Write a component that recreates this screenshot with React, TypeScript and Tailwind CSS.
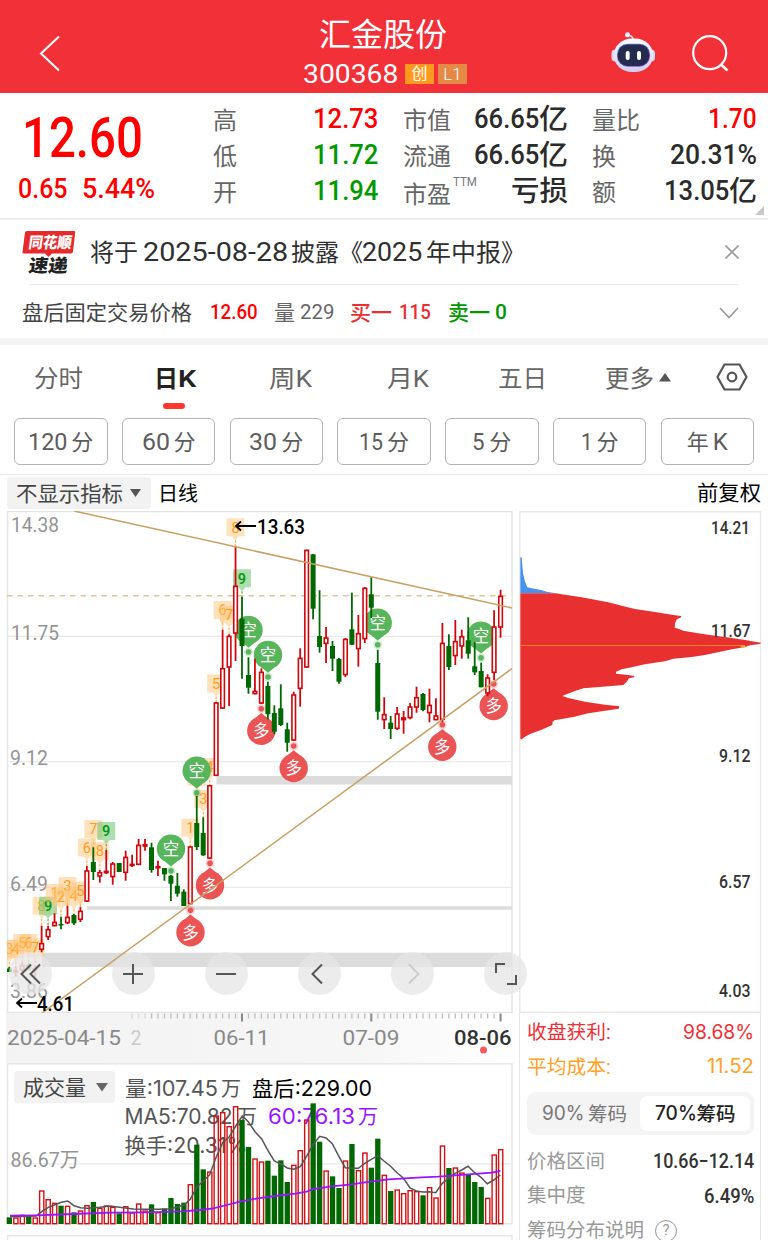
import { useLayoutEffect, useRef, type ReactNode } from "react";

/** Condenses or stretches one line of text to the width of its box. */
function Fit({ className = "", children }: { className?: string; children: ReactNode }) {
  const box = useRef<HTMLSpanElement>(null);
  const line = useRef<HTMLSpanElement>(null);
  useLayoutEffect(() => {
    if (!box.current || !line.current) return;
    const scale = box.current.clientWidth / line.current.offsetWidth;
    line.current.style.transform = `scaleX(${scale})`;
  }, []);
  return (
    <span ref={box} className={`block shrink-0 whitespace-nowrap leading-none ${className}`}>
      <span ref={line} className="inline-block origin-left leading-none">
        {children}
      </span>
    </span>
  );
}

/* ---------- data ---------- */

type Candle = [up: 0 | 1, high: number, top: number, bottom: number, low: number, vol: number];

const candles: Candle[] = [
  [0, 967, 968.5, 972, 972, 502], [1, 966.7, 970, 972.7, 976.7, 502], [1, 962, 965, 970.7, 973, 494],
  [0, 963, 965, 969, 970.7, 500], [1, 966, 968, 970, 977, 502], [1, 925.7, 943, 950, 952.3, 421],
  [1, 925.7, 929, 937.3, 940, 447], [1, 913.3, 921.7, 926.3, 926.3, 458], [0, 916.7, 924, 925.5, 929.3, 467],
  [1, 905.7, 916.7, 923.3, 924, 467], [0, 914, 915, 923.3, 925, 487], [1, 906.7, 910.7, 920, 922, 481],
  [1, 866, 870.3, 901.7, 902, 465], [0, 847.3, 862, 872, 880, 456], [1, 870, 872, 876.7, 882.7, 473],
  [1, 850, 870.7, 873.3, 874, 466], [1, 862, 863.3, 877.3, 884.7, 470], [0, 863, 863, 872, 872, 490],
  [1, 850.7, 856.7, 873, 880.7, 468], [1, 854.7, 863.7, 866, 867, 487], [1, 839, 844.7, 865, 865, 460],
  [1, 839, 844, 846.7, 850.7, 481], [0, 842.7, 847.3, 870, 872.7, 463], [1, 860.7, 866, 868.3, 876, 486],
  [0, 868, 868, 874.3, 880.7, 476], [0, 875, 875.7, 883.7, 901, 444], [0, 873, 885.7, 893.7, 896.7, 462],
  [0, 889.3, 891.7, 906, 906, 458], [1, 846, 846.3, 904.3, 905, 402], [0, 796, 823, 847, 850, 284],
  [0, 817.3, 833, 855.3, 856, 358], [1, 785, 785, 858.7, 859, 364], [1, 702, 702.3, 776, 776, 196],
  [1, 629.7, 668, 708.7, 709, 186], [1, 634.3, 635.7, 667.7, 706, 228], [1, 546.7, 585.7, 633.7, 661, 168],
  [0, 596.7, 618.7, 646, 678.7, 210], [0, 657.3, 675, 687.7, 693.7, 291], [1, 658.7, 690.7, 694.3, 694.3, 325],
  [1, 668.3, 671.7, 703.7, 704, 334], [0, 681.7, 686, 714.3, 719.3, 332], [0, 705.3, 713, 731.7, 734, 377],
  [0, 684.3, 708.3, 725, 726, 331], [0, 722.7, 729.3, 742.7, 751.7, 396], [1, 691.7, 694.3, 740.7, 741, 344],
  [1, 648.3, 657.7, 689, 706.7, 300], [1, 549.7, 549.7, 667.7, 668, 208], [0, 554, 554.3, 608.7, 619.3, 160],
  [0, 590.3, 636, 647, 652.7, 275], [1, 627, 637.3, 644, 663, 361], [0, 641, 646, 658.7, 671, 379],
  [0, 658, 659, 681.7, 683.7, 414], [1, 638, 638.7, 675.3, 677, 331], [0, 592.7, 629.3, 644.7, 645, 282],
  [1, 615, 633, 649.3, 666.7, 360], [1, 587, 587.7, 639.3, 643, 307], [0, 577.3, 594.3, 607.7, 618, 353],
  [0, 649.7, 663, 711.7, 719.7, 266], [1, 697.3, 714, 720.3, 729, 374], [0, 716, 722.7, 729, 739, 423],
  [1, 707, 713.3, 729, 730, 418], [1, 711, 717.3, 720.3, 733.7, 429], [1, 703, 706.3, 718.3, 719.3, 420],
  [1, 686.7, 697, 707.7, 712.7, 423], [0, 693, 694, 710, 711.3, 436], [1, 688.7, 704.7, 713.3, 722.3, 411],
  [1, 698.3, 715.3, 720.3, 720.3, 442], [1, 623, 642.7, 720, 722, 286], [0, 634.3, 646, 667, 670, 354],
  [1, 620, 641, 656.3, 665, 352], [1, 629.7, 636, 646.7, 658.7, 367], [0, 617.3, 640.3, 653.7, 658.7, 373],
  [0, 642, 666.3, 672.3, 675, 396], [0, 662.7, 671, 687.3, 687.3, 411], [1, 674.3, 677.3, 693.7, 696.3, 443],
  [1, 610.3, 626.3, 673, 680, 313], [1, 589.7, 595.7, 627.7, 637.7, 297],
];

const cx = (i: number) => 9.3 + i * 6.464;

/* index, label, centre y, green */
const tags: [number, string, number, boolean?][] = [
  [0, "3", 949], [1, "4", 949], [2, "5", 943], [3, "6", 943], [4, "7", 947.7],
  [5, "8", 905.7], [6, "9", 905.7, true], [7, "1", 893], [8, "2", 897], [9, "3", 886], [10, "4", 896], [11, "5", 890.5],
  [12, "6", 847.5], [13, "7", 829], [14, "8", 851], [15, "9", 831, true],
  [28, "1", 827.5], [29, "2", 777], [30, "3", 799], [31, "4", 767], [32, "5", 683.5],
  [33, "6", 610], [34, "7", 614.5], [35, "8", 527.3], [36, "9", 578.3, true],
];

const sells: [number, number][] = [
  [171, 848.7], [196.7, 770.7], [248.5, 630], [268, 655], [377.7, 622.7], [481, 635.7],
];
const buys: [number, number][] = [
  [190.5, 932.3], [210, 885.3], [261.3, 730.7], [293.7, 768], [442.3, 746.7], [493.7, 706],
];

const ma5 =
  "10,1216.7 36,1216 42,1211.3 48.4,1207.3 55,1204.7 61.3,1202.3 67.7,1201 74,1205.7 80.7,1207.7 87.3,1208.3 100,1207.3 110,1206 119.3,1207.3 133.3,1209 146.7,1209.3 158.3,1209.3 171,1208.7 184,1205 190.3,1199.3 196.7,1187.3 203.3,1181 209.7,1174.7 216.3,1156.7 222.7,1142.7 229,1137.3 235.7,1126 242.3,1116 248.3,1121.7 255,1131.7 261.7,1139 268,1150.7 274.3,1161 281,1164 287.3,1168 293.7,1169.3 300.3,1166.7 306.7,1156 313,1144.7 319.7,1136.3 326,1138 332.3,1143.7 339,1156.7 345.3,1167.7 351.7,1168.3 358.3,1168.3 364.7,1163.3 371.3,1159.3 377.7,1155.7 384,1161 390.3,1166 397,1172.7 403.3,1178 410,1188 416.3,1191 423,1192 429.3,1191.7 435.7,1192.7 442.3,1183.3 448.7,1178.3 455,1173.3 461.7,1170 468,1166.3 474.7,1172.7 481,1177.3 487.3,1183.7 493.7,1180 500.3,1175";
const ma60 =
  "10,1215.7 36.7,1215.3 73,1214 110,1212.7 146.7,1212.3 183.3,1211.3 200,1210 213.3,1208.3 226.7,1205 240,1201.7 258,1198.3 275,1196 295,1193.7 306.7,1191.7 313,1189 331.7,1186.3 351.7,1184.3 365,1182.3 388.3,1179.3 421.7,1177.3 438.3,1176.7 455,1175.3 468.3,1174.3 491.7,1172.7 500.3,1171";

const chipRed =
  "16,265 122,265 140,268 200,277 280,292 320,302 360,312 420,321 475,330 499,333 498,337 486,343 481,352 479,368 490,371 505,377 545,384 590,391 630,396 690,405 720,410 737,413 736,417 705,421 690,426 640,435 570,450 530,456 475,461 450,469 390,478 350,487 320,493 303,500 303,506 340,510 358,513 357,517 342,520 335,530 325,540 262,545 205,550 180,558 158,566 142,573 160,579 210,590 270,599 313,604 311,611 280,616 220,625 175,636 118,646 113,650 112,660 80,674 45,687 30,695 20,703 16,703";
const chipBlue =
  "16,157 20,157 22,180 24,205 30,230 37,247 50,250 78,255 95,260 122,265 16,265";

/* ---------- header ---------- */

function Robot() {
  return (
    <svg width="48" height="44" viewBox="609 30 48 44" className="shrink-0">
      <defs>
        <linearGradient id="head" x1="0" y1="0" x2="0" y2="1">
          <stop offset="0" stopColor="#fdfdff" />
          <stop offset="1" stopColor="#cfcdf0" />
        </linearGradient>
        <linearGradient id="visor" x1="0" y1="0" x2="1" y2="1">
          <stop offset="0" stopColor="#4aa6e0" />
          <stop offset=".5" stopColor="#7a5ad8" />
          <stop offset="1" stopColor="#8a4be0" />
        </linearGradient>
      </defs>
      <path d="M633.500 41c0-3-1.500-5-5-6" fill="none" stroke="#e6e4f6" strokeWidth="1.600" />
      <circle cx="627.500" cy="34.800" r="2.500" fill="#f1effc" />
      <rect x="611.500" y="49.500" width="8" height="12" rx="4" fill="#dcdaf5" />
      <rect x="647" y="49.500" width="8" height="12" rx="4" fill="#dcdaf5" />
      <rect x="614" y="38.500" width="39" height="33.500" rx="18" ry="16" fill="url(#head)" />
      <rect x="617" y="43.700" width="33" height="23" rx="10.500" fill="url(#visor)" />
      <rect x="617.700" y="44.400" width="31.600" height="21.600" rx="10" fill="#252b4d" />
      <rect x="625.700" y="51" width="4" height="9" rx="2" fill="#fff" />
      <rect x="637" y="51" width="4" height="9" rx="2" fill="#fff" />
    </svg>
  );
}

function Header() {
  return (
    <header className="flex h-[93px] items-start bg-[#f23038] text-white">
      <svg width="70" height="93" viewBox="0 0 70 93" className="shrink-0">
        <path d="M59 36.500L41 53.500L59 70.500" fill="none" stroke="#fff" strokeWidth="2" />
      </svg>
      <div className="ml-[233px] flex w-[168px] shrink-0 flex-col pt-[19px]">
        <Fit className="ml-[16px] w-[128px] text-[32px]">汇金股份</Fit>
        <div className="mt-[11px] flex h-6 w-[168px] items-center">
          <Fit className="w-[95px] text-[25px]">300368</Fit>
          <span className="ml-[7px] flex h-5 w-[29px] shrink-0 items-center justify-center bg-[#ff9a1e] text-[16px] leading-none">创</span>
          <span className="ml-[4px] flex h-5 w-[29px] shrink-0 items-center justify-center bg-[#e58a46] text-[17px] font-light leading-none">L1</span>
        </div>
      </div>
      <div className="ml-auto flex h-[93px] items-start gap-[33px] pr-[36px] pt-[30px]">
        <Robot />
        <svg width="42" height="44" viewBox="690 30 42 44" className="shrink-0">
          <circle cx="709.700" cy="52.700" r="16.500" fill="none" stroke="#fff" strokeWidth="2.200" />
          <path d="M721 64.500L727.500 70.500" stroke="#fff" strokeWidth="2.600" />
        </svg>
      </div>
    </header>
  );
}

/* ---------- quote ---------- */

function Quote() {
  const label = "pt-[3px] text-[24px] text-[#666]";
  const value = "text-[28px] font-medium";
  return (
    <section className="relative flex h-[127px] items-start border-b-2 border-[#eeeeee] bg-white">
      <div className="w-[213px] pl-[22px] pt-[17px] text-[#ff0000]">
        <Fit className="w-[121px] text-[56px] font-medium">12.60</Fit>
        <div className="ml-[-4px] mt-[9px] flex">
          <Fit className="w-[50px] text-[28px] font-medium">0.65</Fit>
          <Fit className="ml-[14px] w-[73px] text-[28px] font-medium">5.44%</Fit>
        </div>
      </div>
      <div className="flex w-[165px] flex-col pt-[8px]">
        <div className="flex h-9 items-center justify-between">
          <Fit className={`w-6 ${label}`}>高</Fit>
          <Fit className={`w-[65px] text-[#ff0000] ${value}`}>12.73</Fit>
        </div>
        <div className="flex h-9 items-center justify-between">
          <Fit className={`w-6 ${label}`}>低</Fit>
          <Fit className={`w-[65px] text-[#009900] ${value}`}>11.72</Fit>
        </div>
        <div className="flex h-9 items-center justify-between">
          <Fit className={`w-6 ${label}`}>开</Fit>
          <Fit className={`w-[65px] text-[#009900] ${value}`}>11.94</Fit>
        </div>
      </div>
      <div className="ml-[25px] flex w-[165px] flex-col pt-[8px] text-[#2b2b2b]">
        <div className="flex h-9 items-center justify-between">
          <Fit className={`w-12 ${label}`}>市值</Fit>
          <div className="flex items-center">
            <Fit className={`w-[65px] ${value}`}>66.65</Fit>
            <Fit className="w-[29px] pt-[2px] text-[28px] font-medium">亿</Fit>
          </div>
        </div>
        <div className="flex h-9 items-center justify-between">
          <Fit className={`w-12 ${label}`}>流通</Fit>
          <div className="flex items-center">
            <Fit className={`w-[65px] ${value}`}>66.65</Fit>
            <Fit className="w-[29px] pt-[2px] text-[28px] font-medium">亿</Fit>
          </div>
        </div>
        <div className="flex h-9 items-center justify-between">
          <div className="flex items-start pt-1">
            <Fit className={`w-12 ${label}`}>市盈</Fit>
            <Fit className="-mt-1 ml-[2px] w-[24px] text-[12px] text-[#777]">TTM</Fit>
          </div>
          <Fit className="w-[57px] pt-[2px] text-[28px] font-medium">亏损</Fit>
        </div>
      </div>
      <div className="ml-[24px] flex w-[165px] flex-col pt-[8px] text-[#2b2b2b]">
        <div className="flex h-9 items-center justify-between">
          <Fit className={`w-12 ${label}`}>量比</Fit>
          <Fit className={`w-[49px] text-[#ff0000] ${value}`}>1.70</Fit>
        </div>
        <div className="flex h-9 items-center justify-between">
          <Fit className={`w-6 ${label}`}>换</Fit>
          <Fit className={`w-[87px] ${value}`}>20.31%</Fit>
        </div>
        <div className="flex h-9 items-center justify-between">
          <Fit className={`w-6 ${label}`}>额</Fit>
          <div className="flex items-center">
            <Fit className={`w-[65px] ${value}`}>13.05</Fit>
            <Fit className="w-[28px] pt-[2px] text-[28px] font-medium">亿</Fit>
          </div>
        </div>
      </div>
      <svg width="9" height="9" className="absolute bottom-[3px] right-1">
        <path d="M9 0V9H0Z" fill="#c8c8c8" />
      </svg>
    </section>
  );
}

/* ---------- notices ---------- */

function Notices() {
  return (
    <section className="bg-white">
      <div className="ml-[22px] mr-[29px] flex h-[64px] items-center">
        <svg width="54" height="46" viewBox="22 228 54 46" className="shrink-0">
          <path d="M27 230H74Q75.500 230 75.200 231.500L73 250.500Q72.700 252.500 71 252.500H52L48.500 256L45 252.500H24Q22.200 252.500 22.500 251L25 231.500Q25.200 230 27 230Z" fill="#e8292c" />
          <text transform="translate(28 247.300) skewX(-8)" fontSize="15.500" fontWeight="800" fill="#fff" textLength="43" lengthAdjust="spacingAndGlyphs">同花顺</text>
          <text transform="translate(28 271.300) skewX(-8)" fontSize="18" fontWeight="900" fill="#222" textLength="39" lengthAdjust="spacingAndGlyphs">速递</text>
        </svg>
        <div className="ml-[14px] flex items-center text-[24px] text-[#2f2f2f]">
          <Fit className="w-12 pt-[2px]">将于</Fit>
          <Fit className="ml-[5px] w-[145px] text-[25px]">2025-08-28</Fit>
          <Fit className="ml-[3px] w-12 pt-[2px]">披露</Fit>
          <Fit className="w-6 pt-[2px]">《</Fit>
          <Fit className="-ml-px w-[60px] text-[25px]">2025</Fit>
          <Fit className="ml-[4px] w-[75px] pt-[2px]">年中报</Fit>
          <Fit className="w-6 pt-[2px]">》</Fit>
        </div>
        <svg width="14" height="14" className="ml-auto shrink-0">
          <path d="M0.500 0.500L13.500 13.500M13.500 0.500L0.500 13.500" stroke="#999" strokeWidth="1.700" />
        </svg>
      </div>
      <div className="ml-[29px] mr-[29px] h-px bg-[#e8e8e8]" />
      <div className="flex h-[53px] items-center pl-[22px] pr-[29px] pt-[2px] text-[21px]">
        <Fit className="w-[170px] pt-[2px] text-[#444]">盘后固定交易价格</Fit>
        <Fit className="ml-[18px] w-[48px] font-medium text-[#ff0000]">12.60</Fit>
        <Fit className="ml-[16px] w-[21px] pt-[2px] text-[#666]">量</Fit>
        <Fit className="ml-[5px] w-[34px] text-[#666]">229</Fit>
        <Fit className="ml-[16px] w-[42px] pt-[2px] font-medium text-[#e93030]">买一</Fit>
        <Fit className="ml-[7px] w-[32px] font-medium text-[#e93030]">115</Fit>
        <Fit className="ml-[17px] w-[42px] pt-[2px] font-medium text-[#009900]">卖一</Fit>
        <Fit className="ml-[5px] w-[12px] font-medium text-[#009900]">0</Fit>
        <svg width="20" height="12" className="ml-auto shrink-0">
          <path d="M1 1L10 10.500L19 1" fill="none" stroke="#999" strokeWidth="1.600" />
        </svg>
      </div>
      <div className="h-[7px] bg-[#f4f4f4]" />
    </section>
  );
}

/* ---------- period tabs ---------- */

function Periods() {
  const pill = "flex h-[47px] w-[93.500px] shrink-0 items-center justify-center rounded-[6px] border border-[#b3b3b3] text-[22px] text-[#5c5c5c]";
  return (
    <section className="border-b border-[#e8e8e8] bg-white">
      <nav className="flex h-[65px] items-center pl-[34px] text-[24px] text-[#666]">
        <Fit className="w-[49px] pt-[2px]">分时</Fit>
        <div className="relative ml-[71px]">
          <div className="flex w-[42px] pt-[2px] font-semibold text-[#222]">
            <Fit className="w-[24px]">日</Fit>
            <Fit className="w-[18px]">K</Fit>
          </div>
          <span className="absolute left-[9px] top-[38px] h-[6px] w-[22px] rounded-full bg-[#ff372d]" />
        </div>
        <Fit className="ml-[73px] w-[43px] pt-[2px]">周K</Fit>
        <Fit className="ml-[75px] w-[42px] pt-[2px]">月K</Fit>
        <Fit className="ml-[69px] w-[49px] pt-[2px]">五日</Fit>
        <Fit className="ml-[58px] w-[49px] pt-[2px]">更多</Fit>
        <svg width="12" height="9" className="ml-[5px] shrink-0">
          <path d="M6 0L12 8.500H0Z" fill="#555" />
        </svg>
        <svg width="32" height="30" viewBox="716 363 32 30" className="ml-[45px] shrink-0">
          <path d="M724.500 364.500H739.500L746.500 377L739.500 389.500H724.500L717.500 377Z" fill="none" stroke="#555" strokeWidth="2.200" strokeLinejoin="round" />
          <circle cx="732" cy="377" r="4.300" fill="none" stroke="#555" strokeWidth="2.200" />
        </svg>
      </nav>
      <div className="flex h-[64px] justify-between pl-[14px] pr-[14px] pt-[8px]">
        <div className={pill}>
          <Fit className="w-[39px] text-[24px]">120</Fit>
          <Fit className="ml-[4px] w-[22px] pt-[2px]">分</Fit>
        </div>
        <div className={pill}>
          <Fit className="w-[28px] text-[24px]">60</Fit>
          <Fit className="ml-[4px] w-[22px] pt-[2px]">分</Fit>
        </div>
        <div className={pill}>
          <Fit className="w-[28px] text-[24px]">30</Fit>
          <Fit className="ml-[4px] w-[22px] pt-[2px]">分</Fit>
        </div>
        <div className={pill}>
          <Fit className="w-[24px] text-[24px]">15</Fit>
          <Fit className="ml-[4px] w-[22px] pt-[2px]">分</Fit>
        </div>
        <div className={pill}>
          <Fit className="w-[13px] text-[24px]">5</Fit>
          <Fit className="ml-[4px] w-[22px] pt-[2px]">分</Fit>
        </div>
        <div className={pill}>
          <Fit className="w-[12px] text-[24px]">1</Fit>
          <Fit className="ml-[4px] w-[22px] pt-[2px]">分</Fit>
        </div>
        <div className={pill}>
          <Fit className="w-[22px] pt-[2px]">年</Fit>
          <Fit className="ml-[4px] w-[15px] text-[24px]">K</Fit>
        </div>
      </div>
    </section>
  );
}

function IndicatorBar() {
  return (
    <div className="flex h-[36px] items-center bg-white pl-[7px] pr-[7px] text-[20px]">
      <div className="flex h-[32px] w-[144px] shrink-0 items-center rounded-[4px] bg-[#f2f2f2] pl-[9px] text-[#444]">
        <Fit className="w-[107px] pt-[2px] text-[21px]">不显示指标</Fit>
        <svg width="11" height="8" className="ml-[7px] shrink-0">
          <path d="M0 0H11L5.500 8Z" fill="#555" />
        </svg>
      </div>
      <Fit className="ml-[7px] w-[40px] pt-[2px] text-black">日线</Fit>
      <Fit className="ml-auto w-[64px] text-[21px] text-black">前复权</Fit>
    </div>
  );
}

/* ---------- K line chart ---------- */

function Tag({ i, label, y, green }: { i: number; label: string; y: number; green?: boolean }) {
  const x = cx(i);
  return (
    <g>
      <path
        d={`M${x - 8} ${y - 9}h16q1 0 1 1v16q0 1-1 1h-4.500l-3.500 4l-3.500-4h-4.500q-1 0-1-1v-16q0-1 1-1z`}
        fill={green ? "#74c878" : "#ffc477"}
        fillOpacity={green ? 0.6 : 0.5}
      />
      <path d={`M${x} ${y + 13}V${y + 20}`} stroke={green ? "#5cb85f" : "#ffb24d"} strokeWidth="1.200" strokeDasharray="2.500 1.200" />
      <text x={x} y={y + 5.200} textAnchor="middle" fontSize="14.500" fill={green ? "#0a9a12" : "#ff9c1a"} fontWeight={green ? 600 : 400}>
        {label}
      </text>
    </g>
  );
}

function Pin({ x, y, up }: { x: number; y: number; up: boolean }) {
  const color = up ? "#ea5455" : "#57b55b";
  const d = up ? -1 : 1;
  const dot = y + d * 22;
  return (
    <g>
      <circle cx={x} cy={dot} r="4.500" fill={color} fillOpacity=".25" />
      <circle cx={x} cy={dot} r="2.800" fill={color} />
      <circle cx={x} cy={y} r="14.200" fill={color} />
      <path d={`M${x - 6.500} ${y + d * 12.500}L${x} ${y + d * 17.800}L${x + 6.500} ${y + d * 12.500}Z`} fill={color} />
      <text x={x} y={y + 6.200} textAnchor="middle" fontSize="16.500" fill="#fff">
        {up ? "多" : "空"}
      </text>
    </g>
  );
}

function KLine() {
  return (
    <svg width="516" height="502" viewBox="0 511 516 502" className="block">
      <defs>
        <clipPath id="plot">
          <rect x="7" y="511" width="505" height="502" />
        </clipPath>
      </defs>
      <rect x="7.500" y="511.500" width="504.500" height="501" fill="#fff" stroke="#e4e4e4" strokeWidth="1.500" />
      <path d="M8 636.300H512M8 761.700H512M8 887.300H512" stroke="#eaeaea" strokeWidth="1.300" />
      <path d="M216.500 776H512V784.500H216.500ZM87 906.300H512V909.700H87ZM42 952.700H512V967H42Z" fill="#dcdcdc" />
      <g fontSize="20.500" fill="#949494">
        <text x="11" y="532" textLength="48" lengthAdjust="spacingAndGlyphs">14.38</text>
        <text x="11" y="639.500" textLength="48" lengthAdjust="spacingAndGlyphs">11.75</text>
        <text x="10" y="765" textLength="38" lengthAdjust="spacingAndGlyphs">9.12</text>
        <text x="10" y="890.500" textLength="38" lengthAdjust="spacingAndGlyphs">6.49</text>
        <text x="10" y="998" textLength="38" lengthAdjust="spacingAndGlyphs">3.86</text>
      </g>
      <g clipPath="url(#plot)">
        {tags.map(([i, label, y, green]) => (
          <Tag key={i} i={i} label={label} y={y} green={green} />
        ))}
      </g>
      <path d="M7 595.700H508" stroke="#e3c596" strokeWidth="1.500" strokeDasharray="5.500 5" />
      {sells.map(([x, y]) => (
        <Pin key={x} x={x} y={y} up={false} />
      ))}
      {buys.map(([x, y]) => (
        <Pin key={x} x={x} y={y} up />
      ))}
      <g clipPath="url(#plot)">
        {candles.map(([up, high, top, bottom, low], i) => {
          const x = cx(i);
          return up ? (
            <g key={i} stroke="#d1060b" opacity={i > 0 && i < 5 ? 0.55 : 1}>
              <path d={`M${x} ${high}V${low}`} strokeWidth="1.800" />
              <rect x={x - 1.800} y={top + 0.700} width="3.600" height={Math.max(1, bottom - top - 1.400)} fill="#fff" strokeWidth="1.600" />
            </g>
          ) : (
            <g key={i} fill="#006800" opacity={i > 0 && i < 5 ? 0.55 : 1}>
              <path d={`M${x} ${high}V${low}`} stroke="#006800" strokeWidth="1.800" />
              <rect x={x - 2.500} y={top} width="5" height={bottom - top} />
            </g>
          );
        })}
      </g>
      <path d="M74 511L512 608M42 1013L512 668.500" stroke="#c9a063" strokeWidth="1.500" />
      <g stroke="#000" strokeWidth="1.800" fill="none">
        <path d="M236 526H256M241 521.500L236 526L241 530.500M17 1003H37M22 998.500L17 1003L22 1007.500" />
      </g>
      <g fontSize="21" fontWeight="500" fill="#000">
        <text x="257" y="533.500" textLength="48" lengthAdjust="spacingAndGlyphs">13.63</text>
        <text x="37" y="1010.500" textLength="37" lengthAdjust="spacingAndGlyphs">4.61</text>
      </g>
    </svg>
  );
}

function Controls() {
  const button = "flex h-[43px] w-[43px] shrink-0 items-center justify-center rounded-full bg-[#e6e6e6]/75";
  return (
    <div className="absolute left-[9px] top-[441px] z-10 flex">
      <button className={button}>
        <svg width="24" height="24" fill="none" stroke="#555" strokeWidth="2">
          <path d="M12 2.500L2.500 12L12 21.500M21 2.500L11.500 12L21 21.500" />
        </svg>
      </button>
      <div className="ml-[59.500px] flex gap-[50.200px]">
        <button className={button}>
          <svg width="24" height="24" fill="none" stroke="#555" strokeWidth="2">
            <path d="M12 2V22M2 12H22" />
          </svg>
        </button>
        <button className={button}>
          <svg width="24" height="24" fill="none" stroke="#555" strokeWidth="2">
            <path d="M2 12H22" />
          </svg>
        </button>
        <button className={button}>
          <svg width="24" height="24" fill="none" stroke="#555" strokeWidth="2">
            <path d="M15 2.500L5.500 12L15 21.500" />
          </svg>
        </button>
        <button className={button}>
          <svg width="24" height="24" fill="none" stroke="#ccc" strokeWidth="2">
            <path d="M8 2.500L17.500 12L8 21.500" />
          </svg>
        </button>
        <button className={button}>
          <svg width="24" height="24" fill="none" stroke="#555" strokeWidth="2">
            <path d="M2 11V2H11M22 13V22H13" />
          </svg>
        </button>
      </div>
    </div>
  );
}

function Timeline() {
  const ticks = candles.map((_, i) => i).filter((i) => i >= 19);
  return (
    <svg width="516" height="50" viewBox="0 1013 516 50" className="block">
      <defs>
        <linearGradient id="rail" x1="0" x2="1" y1="0" y2="0">
          <stop offset="0" stopColor="#f3f3f3" />
          <stop offset=".7" stopColor="#f6f6f6" />
          <stop offset="1" stopColor="#ffffff" />
        </linearGradient>
      </defs>
      <rect x="6" y="1013" width="506" height="50" fill="url(#rail)" />
      {ticks.map((i) =>
        i === 36 || i === 56 || i === 76 ? (
          <path key={i} d={`M${cx(i)} 1013.500V1021.500`} stroke="#888" strokeWidth="2" />
        ) : (
          <path key={i} d={`M${cx(i)} 1013.500V1018.500`} stroke="#bdbdbd" strokeWidth="1.300" opacity={i < 22 ? 0.5 : 1} />
        ),
      )}
      <g fontSize="20.500" fill="#888">
        <text x="7" y="1044.500" textLength="114" lengthAdjust="spacingAndGlyphs">2025-04-15</text>
        <text x="130.500" y="1044.500" fill="#ccc" textLength="11" lengthAdjust="spacingAndGlyphs">2</text>
        <text x="213.500" y="1044.500" textLength="56" lengthAdjust="spacingAndGlyphs">06-11</text>
        <text x="342.500" y="1044.500" textLength="57" lengthAdjust="spacingAndGlyphs">07-09</text>
        <text x="454" y="1044.500" fill="#333" fontWeight="500" textLength="57.500" lengthAdjust="spacingAndGlyphs">08-06</text>
      </g>
      <circle cx="483.500" cy="1050" r="3.500" fill="#f35a5e" />
    </svg>
  );
}

function VolumePanel() {
  return (
    <div className="relative h-[177px]">
      <svg width="516" height="177" viewBox="0 1063 516 177" className="block">
        <rect x="7.500" y="1063.800" width="504.500" height="160" fill="#fff" stroke="#e6e6e6" strokeWidth="1.400" />
        <rect x="7.500" y="1235.800" width="504.500" height="20" fill="#fff" stroke="#e6e6e6" strokeWidth="1.400" />
        <path d="M8 1163.800H512" stroke="#eaeaea" strokeWidth="1.300" />
        <g fontSize="21" fill="#555" className="font-[Inter,'Noto_Sans_CJK_SC',sans-serif]">
          <text x="125" y="1095.500" textLength="93" lengthAdjust="spacingAndGlyphs">量:107.45</text>
          <text x="221" y="1095.500" fontSize="20">万</text>
          <text x="252" y="1095.500" fill="#000" textLength="120" lengthAdjust="spacingAndGlyphs">盘后:229.00</text>
          <text x="124.500" y="1124" textLength="108" lengthAdjust="spacingAndGlyphs">MA5:70.82</text>
          <text x="237" y="1124" fontSize="20">万</text>
          <text x="268" y="1124" fill="#9a13ff" textLength="87" lengthAdjust="spacingAndGlyphs">60:76.13</text>
          <text x="358" y="1124" fill="#9a13ff" fontSize="20">万</text>
          <text x="124.500" y="1152.500" textLength="123" lengthAdjust="spacingAndGlyphs">换手:20.31%</text>
        </g>
        <text x="10.500" y="1167" fontSize="20.500" fill="#949494" textLength="69" lengthAdjust="spacingAndGlyphs">86.67万</text>
        {candles.map(([up, , , , , v], i) => {
          const y = 1050 + v / 3;
          return up ? (
            <rect key={i} x={cx(i) - 2} y={y + 0.700} width="4.200" height={1223 - y} fill="none" stroke="#d40f12" strokeWidth="1.400" />
          ) : (
            <rect key={i} x={cx(i) - 2.600} y={y} width="5.300" height={1224 - y} fill="#006800" />
          );
        })}
        <polyline points={ma5} fill="none" stroke="#555" strokeWidth="1.500" />
        <polyline points={ma60} fill="none" stroke="#9a13ff" strokeWidth="1.800" />
      </svg>
      <div className="absolute left-[14px] top-[8px] flex h-[32px] w-[101px] items-center rounded-[4px] bg-[#f2f2f2] pl-[9px] text-[#444]">
        <Fit className="w-[63px] pt-[2px] text-[21px]">成交量</Fit>
        <svg width="12" height="9" className="ml-[10px] shrink-0">
          <path d="M0 0H12L6 8.500Z" fill="#666" />
        </svg>
      </div>
    </div>
  );
}

/* ---------- chip distribution ---------- */

function ChipChart() {
  return (
    <svg width="252" height="502" viewBox="516 511 252 502" className="block">
      <path d="M519.800 1013V511.700H760.500V1013M519.800 1012.300H760.500" fill="none" stroke="#e8e8e8" strokeWidth="1.400" />
      <g transform="translate(515 505) scale(.33333)">
        <polygon points={chipBlue} fill="#4690ee" />
        <polygon points={chipRed} fill="#e83031" />
      </g>
      <path d="M520.500 645.500H745" stroke="#f5821c" strokeWidth="1.200" />
      <path d="M740.500 646.500H745" stroke="#ffa21a" strokeWidth="2" />
      <g fontSize="18" fontWeight="500" fill="#333">
        <text x="711" y="534.300" textLength="39" lengthAdjust="spacingAndGlyphs">14.21</text>
        <text x="711" y="636.700" textLength="39.500" lengthAdjust="spacingAndGlyphs">11.67</text>
        <text x="719" y="762" textLength="31.500" lengthAdjust="spacingAndGlyphs">9.12</text>
        <text x="719" y="888" textLength="31.500" lengthAdjust="spacingAndGlyphs">6.57</text>
        <text x="719" y="997.300" textLength="31.500" lengthAdjust="spacingAndGlyphs">4.03</text>
      </g>
    </svg>
  );
}

function ChipStats() {
  const inter = "font-[Inter,'Noto_Sans_CJK_SC',sans-serif]";
  return (
    <div className="ml-[3px] mr-[7px] h-[227px] overflow-hidden border-x border-[#e8e8e8] pl-[7px] pr-[6px] pt-[2px] text-[19.500px]">
      <div className="flex h-[35px] items-center justify-between text-[#f02f35]">
        <Fit className="w-[84px] pt-[1px]">收盘获利:</Fit>
        <Fit className={`w-[71px] ${inter}`}>98.68%</Fit>
      </div>
      <div className="flex h-[34px] items-center justify-between text-[#ffa01e]">
        <Fit className="w-[84px] pt-[1px]">平均成本:</Fit>
        <Fit className={`w-[47px] ${inter}`}>11.52</Fit>
      </div>
      <div className="mt-[8px] flex h-[43px] rounded-[9px] bg-[#f4f4f4] p-[4px]">
        <div className="flex w-[109px] items-center pl-[11px] text-[#777]">
          <Fit className={`w-[43px] ${inter}`}>90%</Fit>
          <Fit className="ml-[3px] w-[39px] pt-[2px]">筹码</Fit>
        </div>
        <div className="flex flex-1 items-center justify-center rounded-[7px] bg-white font-medium text-[#222]">
          <Fit className={`w-[42px] ${inter}`}>70%</Fit>
          <Fit className="w-[39px] pt-[2px]">筹码</Fit>
        </div>
      </div>
      <div className="mt-[8px] flex h-[35px] items-center justify-between text-[#999]">
        <Fit className="w-[78px] pt-[2px]">价格区间</Fit>
        <Fit className="w-[101px] text-[20px] font-medium text-[#333]">10.66−12.14</Fit>
      </div>
      <div className="flex h-[35px] items-center justify-between text-[#999]">
        <Fit className="w-[59px] pt-[1px]">集中度</Fit>
        <Fit className="w-[50px] text-[20px] font-medium text-[#333]">6.49%</Fit>
      </div>
      <div className="flex h-[35px] items-center text-[#999]">
        <Fit className="w-[117px] pt-[1px]">筹码分布说明</Fit>
        <span className="ml-[11px] flex h-[22px] w-[22px] shrink-0 items-center justify-center rounded-full border-[1.500px] border-[#999] text-[15px] leading-none">
          ?
        </span>
      </div>
    </div>
  );
}

export default function App() {
  return (
    <main className="h-[1240px] w-[768px] overflow-hidden bg-white font-[Roboto,'Noto_Sans_CJK_SC',sans-serif]">
      <Header />
      <Quote />
      <Notices />
      <Periods />
      <IndicatorBar />
      <div className="flex">
        <div className="relative w-[516px] shrink-0">
          <KLine />
          <Controls />
          <Timeline />
          <VolumePanel />
        </div>
        <div className="w-[252px] shrink-0">
          <ChipChart />
          <ChipStats />
        </div>
      </div>
    </main>
  );
}
